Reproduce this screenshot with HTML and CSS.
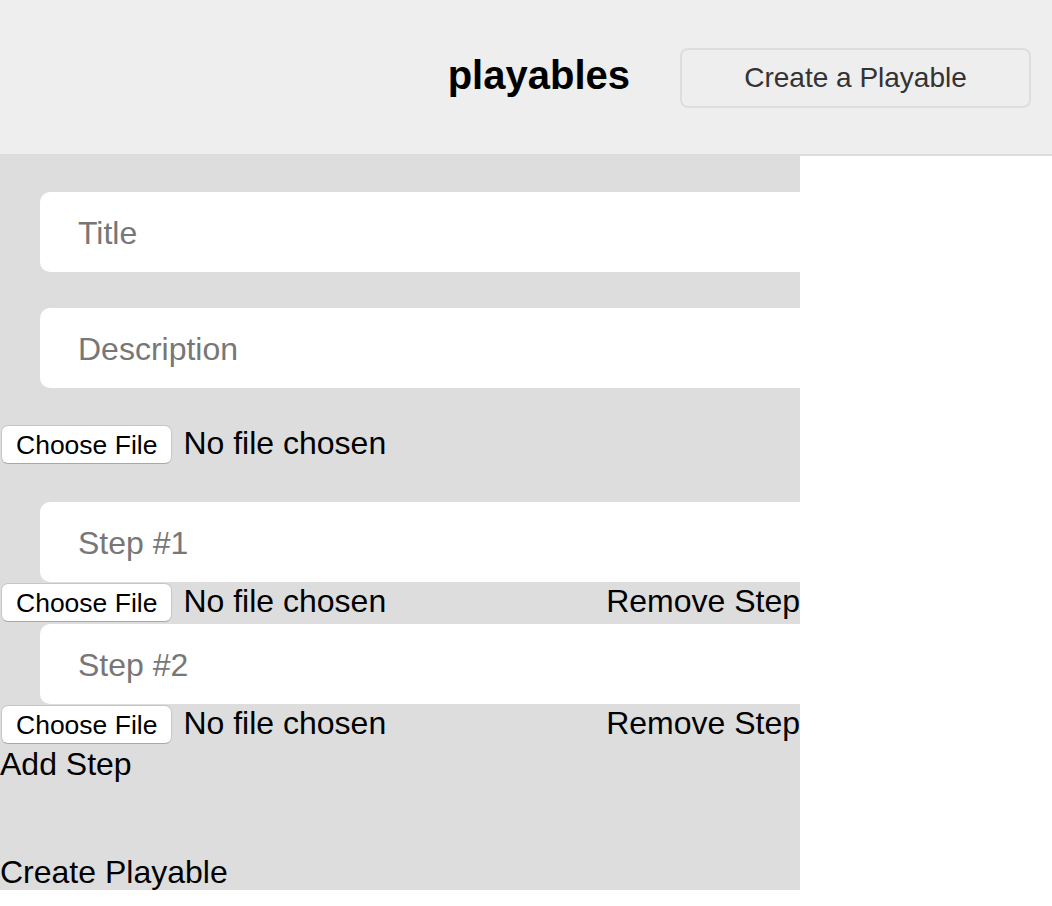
FILE: index.html
```html
<!DOCTYPE html>
<html lang="en">
<head>
<meta charset="utf-8">
<title>playables</title>
<link rel="stylesheet" href="styles.css">
</head>
<body>
<header class="topbar">
  <h1 class="brand">playables</h1>
  <button class="create-link" type="button">Create a Playable</button>
</header>
<form class="playable-form">
  <input class="field" type="text" placeholder="Title">
  <input class="field" type="text" placeholder="Description">
  <div class="file-row file-row-main">
    <button class="file-btn" type="button">Choose File</button>
    <span class="file-label">No file chosen</span>
  </div>
  <div class="steps">
    <div class="step">
      <input class="field step-field" type="text" placeholder="Step #1">
      <div class="file-row">
        <button class="file-btn" type="button">Choose File</button>
        <span class="file-label">No file chosen</span>
        <span class="remove-step">Remove Step</span>
      </div>
    </div>
    <div class="step">
      <input class="field step-field" type="text" placeholder="Step #2">
      <div class="file-row">
        <button class="file-btn" type="button">Choose File</button>
        <span class="file-label">No file chosen</span>
        <span class="remove-step">Remove Step</span>
      </div>
    </div>
  </div>
  <div class="text-action">Add Step</div>
  <div class="text-action submit-action">Create Playable</div>
</form>
</body>
</html>
```

FILE: styles.css
```css
html, body {
  margin: 0;
  padding: 0;
  background: #fff;
}

body {
  font-family: "Liberation Sans", Helvetica, Arial, sans-serif;
  font-size: 32px;
  color: #000;
}

.topbar {
  height: 154px;
  background: #eeeeee;
  border-bottom: 2px solid #dddddd;
  display: flex;
  align-items: center;
  justify-content: flex-end;
  gap: 50px;
  padding-right: 21px;
}

.brand {
  margin: 0;
  font-size: 40px;
  font-weight: bold;
  line-height: 46px;
  padding-bottom: 4px;
}

.create-link {
  width: 351px;
  height: 60px;
  margin-top: 1px;
  background: #eeeeee;
  border: 2px solid #dddddd;
  border-radius: 8px;
  font-family: "Liberation Sans", Helvetica, Arial, sans-serif;
  font-size: 28px;
  color: #333333;
  padding: 0;
}

.playable-form {
  width: 800px;
  background: #dddddd;
  padding-top: 36px;
  display: flex;
  flex-direction: column;
  align-items: flex-start;
}

.field {
  box-sizing: border-box;
  display: block;
  width: 800px;
  height: 80px;
  margin: 0 0 36px 40px;
  border: none;
  border-radius: 10px;
  background: #fff;
  padding: 2px 0 0 38px;
  font-family: "Liberation Sans", Helvetica, Arial, sans-serif;
  font-size: 32px;
  outline: none;
}

.field::placeholder {
  color: #777777;
}

.step-field {
  margin-bottom: 0;
}

.file-row {
  width: 800px;
  height: 42px;
  display: flex;
  align-items: baseline;
}

.file-row-main {
  margin-bottom: 36px;
}

.file-btn {
  height: 39px;
  margin: 1px 0 0 1px;
  padding: 0 14px;
  background: #fff;
  border: 1px solid #c6c6c6;
  border-bottom-color: #a9a9a9;
  border-radius: 7px;
  font-family: "Liberation Sans", Helvetica, Arial, sans-serif;
  font-size: 26.5px;
  line-height: 30px;
  color: #000;
}

.file-label {
  margin-left: 11px;
  line-height: 37px;
}

.remove-step {
  margin-left: auto;
  line-height: 37px;
}

.steps {
  display: flex;
  flex-direction: column;
}

.text-action {
  line-height: 37px;
}

.text-action:first-of-type {
  margin-top: 1px;
}

.submit-action {
  margin-top: 71px;
  margin-bottom: -1px;
}
```
